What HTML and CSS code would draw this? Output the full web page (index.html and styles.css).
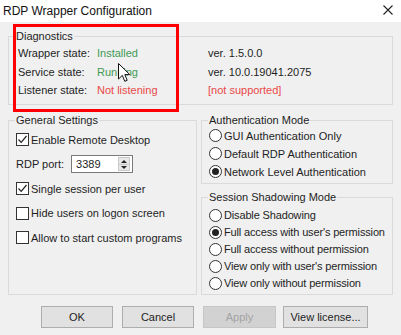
FILE: index.html
```html
<!DOCTYPE html>
<html lang="en">
<head>
  <meta charset="UTF-8" />
  <title>RDP Wrapper Configuration</title>
  <link rel="stylesheet" href="styles.css">
</head>
<body>
  <div class="window">
    <div class="titlebar">
      <span class="title">RDP Wrapper Configuration</span>
      <svg class="close" width="10" height="10" viewBox="0 0 10 10">
        <path d="M0.5 0.5 L9.5 9.5 M9.5 0.5 L0.5 9.5" stroke="#222" stroke-width="1.1" fill="none"/>
      </svg>
    </div>

    <div class="client">
      <fieldset class="group diag">
        <legend>Diagnostics</legend>
        <div class="diag-grid">
          <span>Wrapper state:</span><span class="ok">Installed</span><span>ver. 1.5.0.0</span>
          <span>Service state:</span><span class="ok">Running</span><span>ver. 10.0.19041.2075</span>
          <span>Listener state:</span><span class="bad">Not listening</span><span class="bad">[not supported]</span>
        </div>
      </fieldset>

      <div class="columns">
        <fieldset class="group general">
          <legend>General Settings</legend>
          <div class="row">
            <span class="check on"><svg viewBox="0 0 11 11"><path d="M1.5 5.5 L4.2 8.3 L9.5 2" stroke="#222" stroke-width="1.2" fill="none"/></svg></span>
            <span>Enable Remote Desktop</span>
          </div>
          <div class="row">
            <span>RDP port:</span>
            <div class="spin">
              <span class="spin-val">3389</span>
              <span class="spin-btns">
                <span class="up"></span>
                <span class="down"></span>
              </span>
            </div>
          </div>
          <div class="row">
            <span class="check on"><svg viewBox="0 0 11 11"><path d="M1.5 5.5 L4.2 8.3 L9.5 2" stroke="#222" stroke-width="1.2" fill="none"/></svg></span>
            <span>Single session per user</span>
          </div>
          <div class="row">
            <span class="check"></span>
            <span>Hide users on logon screen</span>
          </div>
          <div class="row">
            <span class="check"></span>
            <span>Allow to start custom programs</span>
          </div>
        </fieldset>

        <div class="right-col">
          <fieldset class="group auth">
            <legend>Authentication Mode</legend>
            <div class="radio-row"><span class="radio"></span>GUI Authentication Only</div>
            <div class="radio-row"><span class="radio"></span>Default RDP Authentication</div>
            <div class="radio-row"><span class="radio on"></span>Network Level Authentication</div>
          </fieldset>
          <fieldset class="group shadow">
            <legend>Session Shadowing Mode</legend>
            <div class="radio-row"><span class="radio"></span>Disable Shadowing</div>
            <div class="radio-row"><span class="radio on"></span>Full access with user's permission</div>
            <div class="radio-row"><span class="radio"></span>Full access without permission</div>
            <div class="radio-row"><span class="radio"></span>View only with user's permission</div>
            <div class="radio-row"><span class="radio"></span>View only without permission</div>
          </fieldset>
        </div>
      </div>

      <div class="buttons">
        <button class="btn">OK</button>
        <button class="btn">Cancel</button>
        <button class="btn disabled">Apply</button>
        <button class="btn wide">View license...</button>
      </div>

      <!-- annotation + mouse pointer on top -->
      <div class="highlight"></div>
      <svg class="cursor" width="13" height="20" viewBox="0 0 13 20">
        <path d="M0.5 0.5 L0.5 16 L4.3 12.4 L6.8 18.3 L9.2 17.3 L6.8 11.6 L11.8 11.6 Z" fill="#fff" stroke="#111" stroke-width="1"/>
      </svg>
    </div>
  </div>
</body>
</html>
```

FILE: styles.css
```css
* { margin: 0; padding: 0; box-sizing: border-box; }
body {
  width: 401px;
  height: 335px;
  overflow: hidden;
  font-family: 'Liberation Sans', Arial, sans-serif;
  font-size: 11px;
  color: #1e1e1e;
  background: #f0f0f0;
}
.window { width: 401px; height: 335px; }

.titlebar {
  height: 22px;
  background: #fff;
  display: flex;
  justify-content: space-between;
  align-items: center;
  padding: 0 8px 0 3px;
}
.title { font-size: 12px; color: #111; }
.close { display: block; margin-top: -2px; }

.client {
  position: relative;
  height: 313px;
  padding: 8px 8px 0;
  background: #f0f0f0;
}

/* group boxes */
.group {
  border: 1px solid #dadada;
  padding: 0 6px;
  min-width: 0;
}
.group legend {
  padding: 0 1px;
  line-height: 13px;
  color: #1e1e1e;
}

.diag { padding-bottom: 4px; }
.diag-grid {
  display: grid;
  grid-template-columns: 79px 111px 1fr;
  line-height: 18.5px;
  margin: 1px 0 0 3px;
}
.ok { color: #3f9a55; }
.bad { color: #e94848; }

.columns {
  display: flex;
  gap: 4px;
  margin-top: 9px;
}
.general { width: 189px; }
.right-col {
  flex: 1;
  display: flex;
  flex-direction: column;
  gap: 7px;
}

.row {
  height: 24.5px;
  display: flex;
  align-items: center;
  gap: 2px;
  padding-left: 1px;
}
.general legend + .row { margin-top: 1px; }

.check {
  width: 13px;
  height: 13px;
  border: 1px solid #333;
  background: #fff;
  display: flex;
  align-items: center;
  justify-content: center;
}
.check svg { width: 11px; height: 11px; }

.spin {
  width: 62px;
  height: 18px;
  margin-left: 5px;
  border: 1px solid #7a7a7a;
  background: #fff;
  display: flex;
  align-items: center;
  justify-content: space-between;
  padding: 0 2px 0 4px;
}
.spin-btns {
  width: 12px;
  height: 14px;
  display: flex;
  flex-direction: column;
  border: 1px solid #c8c8c8;
  background: #e8e8e8;
}
.spin-btns span {
  flex: 1;
  display: flex;
  align-items: center;
  justify-content: center;
}
.spin-btns .up { border-bottom: 1px solid #c8c8c8; }
.spin-btns .up::after {
  content: '';
  border: 3px solid transparent;
  border-bottom: 3px solid #222;
  border-top: 0;
}
.spin-btns .down::after {
  content: '';
  border: 3px solid transparent;
  border-top: 3px solid #222;
  border-bottom: 0;
}

.auth { padding-bottom: 2px; }
.shadow { padding-bottom: 2px; }
.auth .radio-row { height: 18px; }
.shadow .radio-row { height: 17px; letter-spacing: -0.15px; }
.shadow legend + .radio-row { margin-top: 3px; }

.radio-row {
  display: flex;
  align-items: center;
  gap: 2px;
  padding-left: 1px;
  white-space: nowrap;
}
.radio {
  width: 13px;
  height: 13px;
  border: 1px solid #333;
  border-radius: 50%;
  background: #fff;
  display: flex;
  align-items: center;
  justify-content: center;
  flex-shrink: 0;
}
.radio.on::after {
  content: '';
  width: 7px;
  height: 7px;
  border-radius: 50%;
  background: #222;
}

.buttons {
  display: flex;
  margin-top: 11px;
  padding-left: 33px;
}
.btn {
  width: 72px;
  height: 22px;
  margin-right: 9px;
  font-family: 'Liberation Sans', Arial, sans-serif;
  font-size: 11px;
  color: #1e1e1e;
  background: #e1e1e1;
  border: 1px solid #adadad;
}
.btn.disabled {
  width: 73px;
  margin-right: 7px;
  color: #a3a3a3;
  background: #d2d2d2;
  border-color: #c6c6c6;
}
.btn.wide { width: 85px; }

.highlight {
  position: absolute;
  left: 13px;
  top: 2px;
  width: 166px;
  height: 88px;
  border: 3px solid #f00;
}
.cursor {
  position: absolute;
  left: 118px;
  top: 41px;
}
```
